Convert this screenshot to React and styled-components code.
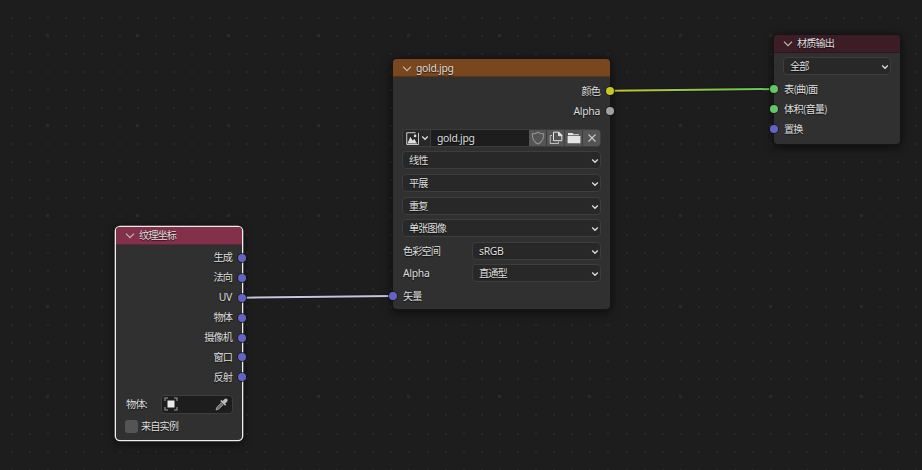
import React from "react";
import styled, { createGlobalStyle } from "styled-components";

const GlobalStyle = createGlobalStyle`
  * { box-sizing: border-box; }
  body { margin: 0; background: #1d1d1d; overflow: hidden; }
`;

const Editor = styled.main`
  position: relative;
  width: 922px;
  height: 470px;
  overflow: hidden;
  background: #1d1d1d;
  color: #dedede;
  font: 10.4px/16px "Noto Sans", "Noto Sans CJK SC", sans-serif;
  text-shadow: 0 1px 1px rgba(0, 0, 0, 0.7);
  white-space: nowrap;
`;

const Backdrop = styled.svg`
  position: absolute;
  inset: 0;
  display: block;
`;

const NodeFrame = styled.section`
  position: absolute;
  left: ${(p) => p.$x}px;
  top: ${(p) => p.$y}px;
  width: ${(p) => p.$w}px;
  height: ${(p) => p.$h}px;
  border-radius: 4px;
  background: #303030;
  box-shadow: ${(p) => (p.$selected ? "0 0 0 1.3px #ededed, " : "0 0 0 1px #151515, ")}0 2px 8px 2px rgba(0, 0, 0, 0.5);
`;

const Header = styled.header`
  display: flex;
  align-items: center;
  gap: 4px;
  height: ${(p) => p.$h || 18}px;
  padding: 0 0 ${(p) => p.$lift || 0}px 9px;
  border-radius: 4px 4px 0 0;
  background: ${(p) => p.$color};
  border-bottom: 1px solid rgba(0, 0, 0, 0.25);
`;

const Body = styled.div`
  display: flex;
  flex-direction: column;
  padding: ${(p) => p.$top}px 9px 0 9px;
`;

const Cjk = styled.span`
  font-family: "Noto Sans CJK SC", sans-serif;
  font-size: 10.2px;
  letter-spacing: ${(p) => p.$track || -0.95}px;
`;

const Latin = styled.span`
  font-size: 10.4px;
  letter-spacing: ${(p) => p.$track || -0.3}px;
`;

const SocketRow = styled.div`
  position: relative;
  display: flex;
  align-items: center;
  justify-content: ${(p) => (p.$out ? "flex-end" : "flex-start")};
  height: ${(p) => p.$h || 20}px;
  padding: 0 1px 1px;
`;

const Socket = styled.i`
  position: absolute;
  top: 50%;
  ${(p) => (p.$out ? "right: -13px;" : "left: -13px;")}
  width: 8px;
  height: 8px;
  margin-top: -4px;
  border-radius: 50%;
  background: ${(p) => p.$color};
  box-shadow: 0 0 0 0.8px #17171a;
`;

const Select = styled.div`
  display: flex;
  align-items: center;
  justify-content: space-between;
  flex: none;
  width: ${(p) => (p.$w ? p.$w + "px" : "auto")};
  height: 18px;
  margin-bottom: ${(p) => p.$gap || 0}px;
  padding: 0 1px 1px 6px;
  border: 1px solid #3d3d3d;
  border-radius: 4px;
  background: #282828;

  > svg {
    margin-top: 2px;
  }
`;

const Property = styled.div`
  display: flex;
  align-items: center;
  justify-content: space-between;
  height: 18px;
  margin-top: ${(p) => p.$mt || 0}px;
  margin-bottom: ${(p) => p.$gap || 0}px;
  padding-left: 1px;
`;

const PropertyName = styled.div`
  padding-bottom: 1px;
`;

const ImageField = styled.div`
  display: flex;
  height: 18px;
  margin: 8px 0 4px;
  border: 1px solid #3d3d3d;
  border-radius: 4px;
  overflow: hidden;
  background: #3d3d3d;
`;

const BrowseButton = styled.div`
  display: flex;
  align-items: center;
  gap: 2px;
  width: 27px;
  padding-left: 3px;
  background: #282828;
`;

const FileName = styled.div`
  flex: 1;
  margin-left: 1px;
  padding-left: 6px;
  line-height: 16px;
  background: #1d1d1d;
`;

const ToolButton = styled.div`
  display: flex;
  align-items: center;
  justify-content: center;
  width: 17px;
  margin-left: ${(p) => (p.$first ? 0 : 1)}px;
  background: #545454;
`;

const ObjectField = styled.div`
  display: flex;
  align-items: center;
  justify-content: space-between;
  width: 72px;
  height: 19px;
  padding: 0 4px 0 2px;
  border: 1px solid #3d3d3d;
  border-radius: 4px;
  background: #1d1d1d;
`;

const CheckRow = styled.div`
  display: flex;
  align-items: center;
  gap: 3px;
  margin-top: 6px;
  height: 14px;
`;

const Checkbox = styled.i`
  width: 13px;
  height: 13px;
  border-radius: 3px;
  background: #545454;
`;

const Glyph = styled.svg`
  display: block;
  flex: none;
  fill: none;
  stroke: ${(p) => p.$color || "#dedede"};
  stroke-width: ${(p) => p.$sw || 1.3};
`;

const HeaderChevron = () => (
  <Glyph width="10" height="8" viewBox="0 0 10 8" $color="#c4b6b4" $sw={1.2}>
    <path d="M1 2.6 5 6.6 9 2.6" />
  </Glyph>
);

const MenuChevron = () => (
  <Glyph width="8" height="6" viewBox="0 0 8 6" $sw={1.25}>
    <path d="M1.200 1.500 4 4.300 6.800 1.500" />
  </Glyph>
);

const PictureIcon = () => (
  <Glyph width="13" height="13" viewBox="0 0 14 14" $sw={1}>
    <path d="M13.500 1v12.500H.8V.8h9.500" />
    <path d="M1.500 12.500 4.800 5.200l3.800 7.300zM6.800 9.200 9 7.500l3 5H8.500z" fill="#dedede" stroke="none" />
    <circle cx="9.800" cy="4.200" r="1.400" fill="#dedede" stroke="none" />
  </Glyph>
);

const ShieldIcon = () => (
  <Glyph width="14" height="14" viewBox="0 0 14 14" $color="#929292" $sw={1.1}>
    <path d="M7 1.200C5.300 2.300 3.300 2.800 1.300 2.900 1.100 7.700 3 11 7 13c4-2 5.900-5.300 5.700-10.100C10.700 2.800 8.700 2.300 7 1.200z" />
  </Glyph>
);

const CopyIcon = () => (
  <Glyph width="14" height="14" viewBox="0 0 14 14" $color="#e0e0e0" $sw={1}>
    <path d="M4.500 1.200h5.300l3 3v5.500H4.500z" />
    <path d="M9.500 1v3.700h3.600z" fill="#e0e0e0" />
    <path d="M3 4.500H1.200v8h8.300v-1.700" opacity=".75" />
  </Glyph>
);

const FolderIcon = () => (
  <Glyph width="14" height="14" viewBox="0 0 14 14">
    <path d="M1 4.200V2h4.600l1 1.300H12v.9zM.6 5.100h12.800v7.100H.6z" fill="#e4e4e4" stroke="none" />
  </Glyph>
);

const CloseIcon = () => (
  <Glyph width="10" height="10" viewBox="0 0 10 10" $color="#c8c8c8" $sw={1.1}>
    <path d="m1.500 1.500 7 7M8.500 1.500l-7 7" />
  </Glyph>
);

const ObjectIcon = () => (
  <Glyph width="14" height="14" viewBox="0 0 14 14" $color="#999" $sw={1.1}>
    <path d="M1 4V1h3M10 1h3v3M13 10v3h-3M4 13H1v-3" />
    <path d="M3.500 3.500h7v7h-7z" fill="#eaeaea" stroke="none" />
  </Glyph>
);

const EyedropperIcon = () => (
  <Glyph width="13" height="13" viewBox="0 0 13 13" $color="#a0a0a0" $sw={1}>
    <path d="M6.600 4.600 2 9.300 1 12l2.700-1 4.700-4.600" fill="#6c6c6c" />
    <path d="m5.200 3 1.200-1 1.300 1L9.400 1.200c.8-.8 2-.8 2.700-.1s.7 1.900-.1 2.700l-1.800 1.700 1 1.300-1 1z" fill="#bcbcbc" stroke="none" />
  </Glyph>
);

const BLUE = "#6363c7";
const GREEN = "#63c763";

const GRID_STEP = 18.09;
const gridDots = [];
for (let row = 0; row < 26; row++) {
  for (let col = 0; col < 51; col++) {
    const major = col % 5 === 2 && row % 5 === 1;
    const x = Math.floor(11 + col * GRID_STEP);
    const y = Math.floor(17 + row * GRID_STEP);
    gridDots.push(
      major
        ? { x: x - 1, y: y - 1, size: 3, color: "#2b2b2b" }
        : { x, y, size: 2, color: "#282828" }
    );
  }
}

const outputs = ["生成", "法向", "UV", "物体", "摄像机", "窗口", "反射"];

function Grid() {
  return (
    <Backdrop width="922" height="470">
      {gridDots.map((d) => (
        <rect key={`${d.x}-${d.y}`} x={d.x} y={d.y} width={d.size} height={d.size} fill={d.color} />
      ))}
    </Backdrop>
  );
}

function Links() {
  return (
    <Backdrop width="922" height="470" fill="none">
      <defs>
        <linearGradient id="shade" gradientUnits="userSpaceOnUse" x1="610" y1="0" x2="774" y2="0">
          <stop offset="0" stopColor="#c7c729" />
          <stop offset="1" stopColor="#63c763" />
        </linearGradient>
      </defs>
      <path d="M610 90.800 774 89M242 297.700 393 296" stroke="#141414" strokeWidth="3.600" />
      <path d="M610 90.800 774 89" stroke="url(#shade)" strokeWidth="2" />
      <path d="M242 297.700 393 296" stroke="#c6c6e2" strokeWidth="2" />
    </Backdrop>
  );
}

export default function App() {
  return (
    <Editor>
      <GlobalStyle />
      <Grid />
      <Links />

      <NodeFrame $x={116} $y={227} $w={126} $h={213} $selected>
        <Header $color="#83314a" $lift={2}>
          <HeaderChevron />
          <Cjk>纹理坐标</Cjk>
        </Header>
        <Body $top={3}>
          {outputs.map((name) => (
            <SocketRow key={name} $out $h={19.9}>
              {name === "UV" ? <Latin>{name}</Latin> : <Cjk>{name}</Cjk>}
              <Socket $out $color={BLUE} />
            </SocketRow>
          ))}
          <Property $mt={8}>
            <PropertyName>
              <Cjk $track={-0.8}>物体:</Cjk>
            </PropertyName>
            <ObjectField>
              <ObjectIcon />
              <EyedropperIcon />
            </ObjectField>
          </Property>
          <CheckRow>
            <Checkbox />
            <Cjk>来自实例</Cjk>
          </CheckRow>
        </Body>
      </NodeFrame>

      <NodeFrame $x={393} $y={59} $w={217} $h={250}>
        <Header $color="#79461d">
          <HeaderChevron />
          <Latin>gold.jpg</Latin>
        </Header>
        <Body $top={4}>
          <SocketRow $out>
            <Cjk>颜色</Cjk>
            <Socket $out $color="#c7c729" />
          </SocketRow>
          <SocketRow $out>
            <Latin>Alpha</Latin>
            <Socket $out $color="#a1a1a1" />
          </SocketRow>
          <ImageField>
            <BrowseButton>
              <PictureIcon />
              <MenuChevron />
            </BrowseButton>
            <FileName>
              <Latin>gold.jpg</Latin>
            </FileName>
            <ToolButton $first>
              <ShieldIcon />
            </ToolButton>
            <ToolButton>
              <CopyIcon />
            </ToolButton>
            <ToolButton>
              <FolderIcon />
            </ToolButton>
            <ToolButton>
              <CloseIcon />
            </ToolButton>
          </ImageField>
          <Select $gap={5}>
            <Cjk>线性</Cjk>
            <MenuChevron />
          </Select>
          <Select $gap={5}>
            <Cjk>平展</Cjk>
            <MenuChevron />
          </Select>
          <Select $gap={4}>
            <Cjk>重复</Cjk>
            <MenuChevron />
          </Select>
          <Select $gap={5}>
            <Cjk>单张图像</Cjk>
            <MenuChevron />
          </Select>
          <Property $gap={4}>
            <PropertyName>
              <Cjk>色彩空间</Cjk>
            </PropertyName>
            <Select $w={129}>
              <Latin>sRGB</Latin>
              <MenuChevron />
            </Select>
          </Property>
          <Property $gap={4}>
            <PropertyName>
              <Latin>Alpha</Latin>
            </PropertyName>
            <Select $w={129}>
              <Cjk>直通型</Cjk>
              <MenuChevron />
            </Select>
          </Property>
          <SocketRow>
            <Cjk>矢量</Cjk>
            <Socket $color={BLUE} />
          </SocketRow>
        </Body>
      </NodeFrame>

      <NodeFrame $x={774} $y={35} $w={126} $h={109}>
        <Header $color="#3c1d26" $lift={1}>
          <HeaderChevron />
          <Cjk>材质输出</Cjk>
        </Header>
        <Body $top={4}>
          <Select $gap={4}>
            <Cjk>全部</Cjk>
            <MenuChevron />
          </Select>
          <SocketRow>
            <Cjk $track={-0.8}>表(曲)面</Cjk>
            <Socket $color={GREEN} />
          </SocketRow>
          <SocketRow>
            <Cjk $track={-0.8}>体积(音量)</Cjk>
            <Socket $color={GREEN} />
          </SocketRow>
          <SocketRow>
            <Cjk>置换</Cjk>
            <Socket $color={BLUE} />
          </SocketRow>
        </Body>
      </NodeFrame>
    </Editor>
  );
}
